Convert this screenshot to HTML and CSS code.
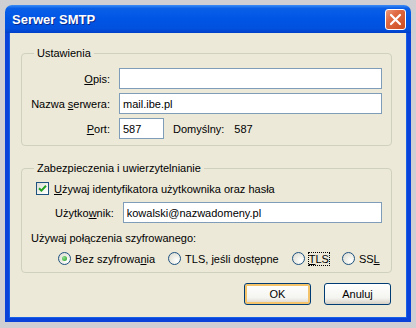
FILE: index.html
```html
<!DOCTYPE html>
<html lang="pl">
<head>
  <meta charset="UTF-8" />
  <title>Serwer SMTP</title>
  <link rel="stylesheet" href="styles.css">
</head>
<body>

<div class="window">
  <div class="titlebar">
    <span class="title">Serwer SMTP</span>
    <button class="close" aria-label="Zamknij">
      <svg width="13" height="13" viewBox="0 0 13 13"><path d="M2 2 L11 11 M11 2 L2 11" stroke="#fff" stroke-width="2.2" stroke-linecap="round"/></svg>
    </button>
  </div>

  <div class="frame">
    <fieldset class="group">
      <legend>Ustawienia</legend>
      <div class="form">
        <label for="opis"><u>O</u>pis:</label>
        <input type="text" id="opis" class="wide" />
        <label for="server">Nazwa <u>s</u>erwera:</label>
        <input type="text" id="server" class="wide" value="mail.ibe.pl" />
        <label for="port"><u>P</u>ort:</label>
        <div class="port-row">
          <input type="text" id="port" class="port" value="587" />
          <span class="def">Domyślny:</span>
          <span class="def-val">587</span>
        </div>
      </div>
    </fieldset>

    <fieldset class="group security">
      <legend>Zabezpieczenia i uwierzytelnianie</legend>
      <div class="check-row">
        <span class="checkbox">
          <svg width="9" height="9" viewBox="0 0 9 9"><path d="M1 4.2 L3.4 6.6 L8 1.8" stroke="#21a121" stroke-width="2" fill="none"/></svg>
        </span>
        <span><u>U</u>żywaj identyfikatora użytkownika oraz hasła</span>
      </div>
      <div class="user-row">
        <label for="user">Użytko<u>w</u>nik:</label>
        <input type="text" id="user" value="kowalski@nazwadomeny.pl" />
      </div>
      <p class="enc">Używaj połączenia szyfrowanego:</p>
      <div class="radios">
        <span class="radio-item"><span class="radio on"></span><span>Bez szyfrowa<u>n</u>ia</span></span>
        <span class="radio-item"><span class="radio"></span><span>TLS, jeśli dostępne</span></span>
        <span class="radio-item"><span class="radio"></span><span class="focus"><u>T</u>LS</span></span>
        <span class="radio-item"><span class="radio"></span><span>SS<u>L</u></span></span>
      </div>
    </fieldset>

    <div class="buttons">
      <button class="btn default">OK</button>
      <button class="btn">Anuluj</button>
    </div>
  </div>
</div>

</body>
</html>
```

FILE: styles.css
```css
    body {
      margin: 0;
      padding: 5px 5px 0 5px;
      background: #cfcfd3;
      font-family: 'Liberation Sans', Arial, sans-serif;
      font-size: 11px;
      color: #000;
    }

    .window {
      width: 406px;
      height: 317px;
      display: flex;
      flex-direction: column;
    }

    .titlebar {
      height: 28px;
      flex: none;
      border-radius: 7px 7px 0 0;
      background: linear-gradient(#3b8cf5 0%, #0a5fe8 12%, #0055e5 50%, #0250de 85%, #003fc8 100%);
      display: flex;
      align-items: center;
      justify-content: space-between;
      padding: 0 5px 0 7px;
    }

    .title {
      color: white;
      font-weight: bold;
      font-size: 13px;
      text-shadow: 1px 1px 0 #0a2a8c;
      padding-top: 1px;
    }

    .close {
      width: 21px;
      height: 21px;
      padding: 0;
      border: 1px solid #fff;
      border-radius: 3px;
      background: linear-gradient(135deg, #ec9a7c 0%, #e06a43 35%, #cc4d1f 100%);
      display: flex;
      align-items: center;
      justify-content: center;
      margin-top: 1px;
    }

    .frame {
      flex: 1;
      background: #ece9d8;
      border: 4px solid #0842d8;
      border-top: none;
      box-shadow: inset 1px 0 0 #1660e8, inset -1px 0 0 #1660e8, inset 0 -1px 0 #1660e8;
      padding: 14px 15px 0 12px;
    }

    .group {
      margin: 0;
      min-width: 0;
      padding: 9px 9px 6px 9px;
      border: 1px solid #d0d0bf;
      border-radius: 4px;
    }

    .group legend {
      padding: 0 3px;
      margin-left: 3px;
    }

    .form {
      display: grid;
      grid-template-columns: 79px 1fr;
      column-gap: 9px;
      row-gap: 4px;
      align-items: center;
    }

    .form label {
      text-align: right;
      white-space: nowrap;
    }

    input {
      font: inherit;
      height: 21px;
      box-sizing: border-box;
      border: 1px solid #7f9db9;
      background: white;
      padding: 0 3px;
      margin: 0;
    }

    .wide {
      width: 100%;
    }

    .port-row {
      display: flex;
      align-items: center;
    }

    .port {
      width: 45px;
    }

    .def {
      margin-left: 9px;
    }

    .def-val {
      margin-left: 10px;
    }

    .security {
      margin-top: 16px;
      padding-top: 8px;
      padding-bottom: 7px;
    }

    .check-row {
      display: flex;
      align-items: center;
      gap: 5px;
      padding-left: 5px;
    }

    .checkbox {
      width: 13px;
      height: 13px;
      box-sizing: border-box;
      border: 1px solid #1c5180;
      background: linear-gradient(135deg, #dcdcd7 0%, #f4f4f0 60%, #fff 100%);
      display: flex;
      align-items: center;
      justify-content: center;
    }

    .user-row {
      display: flex;
      align-items: center;
      gap: 9px;
      margin: 7px 0 0 24px;
    }

    .user-row input {
      flex: 1;
      min-width: 0;
    }

    .enc {
      margin: 9px 0 0 0;
    }

    .radios {
      display: flex;
      align-items: center;
      margin: 8px 0 0 27px;
    }

    .radio-item {
      display: flex;
      align-items: center;
      gap: 4px;
      margin-right: 13px;
      white-space: nowrap;
    }

    .radio {
      width: 13px;
      height: 13px;
      box-sizing: border-box;
      border: 1px solid #1c5180;
      border-radius: 50%;
      background: radial-gradient(circle at 70% 70%, #fff 0%, #f0f0ea 40%, #d8d8d0 100%);
      display: flex;
      align-items: center;
      justify-content: center;
    }

    .radio.on::after {
      content: "";
      width: 5px;
      height: 5px;
      border-radius: 50%;
      background: radial-gradient(circle at 35% 35%, #8fdc8f, #21a121);
    }

    .focus {
      outline: 1px dotted #000;
      outline-offset: 0;
    }

    .buttons {
      display: flex;
      justify-content: flex-end;
      gap: 13px;
      margin-top: 10px;
      padding-right: 1px;
    }

    .btn {
      font: inherit;
      width: 67px;
      height: 22px;
      border: 1px solid #003c74;
      border-radius: 3px;
      background: linear-gradient(#ffffff 0%, #f4f4f0 70%, #d6d0c5 100%);
      color: #000;
    }

    .btn.default {
      box-shadow: inset 0 0 0 2px #f5c46a;
    }
```
